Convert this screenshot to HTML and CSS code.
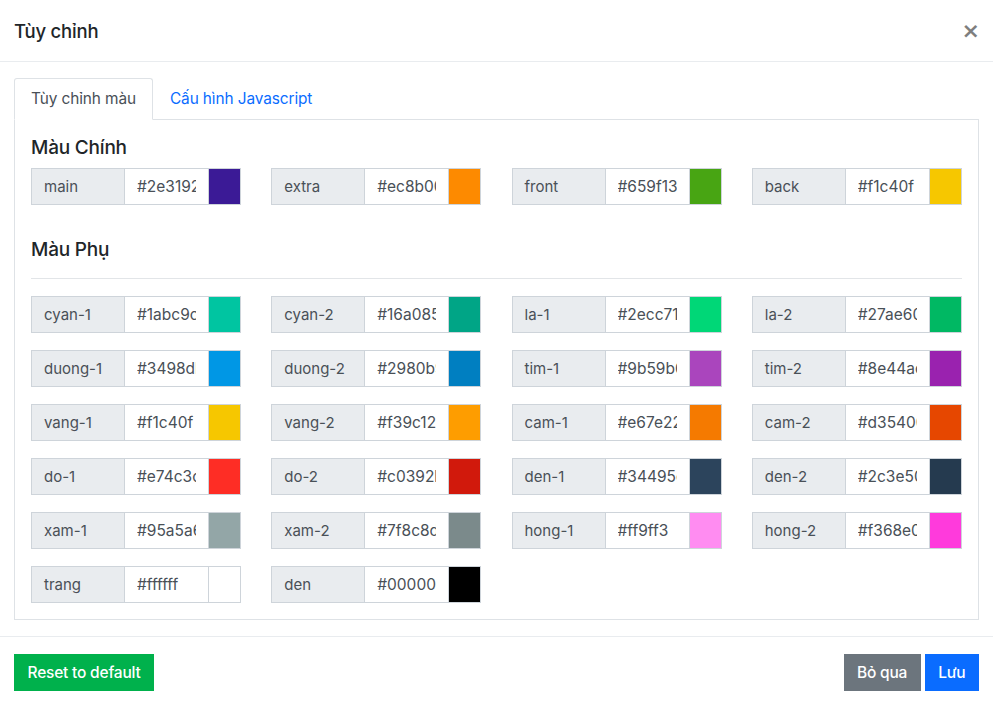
FILE: index.html
```html
<!DOCTYPE html>
<html lang="vi">
<head>
<meta charset="utf-8">
<title>Tùy chỉnh</title>
<link rel="stylesheet" href="styles.css">
</head>
<body>
<div class="modal">
  <div class="modal-header">
    <h4 class="modal-title">Tùy chỉnh</h4>
    <button class="close" type="button" aria-label="Close">×</button>
  </div>
  <div class="modal-body">
    <ul class="nav-tabs">
      <li><a class="nav-link active">Tùy chỉnh màu</a></li>
      <li><a class="nav-link">Cấu hình Javascript</a></li>
    </ul>
    <div class="tab-content">
      <h5 class="section-title">Màu Chính</h5>
      <div class="grid">
        <div class="igroup"><span class="ilabel">main</span><input class="ival" value="#2e3192"><span class="swatch" style="background:#3b1a96"></span></div>
        <div class="igroup"><span class="ilabel">extra</span><input class="ival" value="#ec8b00"><span class="swatch" style="background:#fd8a00"></span></div>
        <div class="igroup"><span class="ilabel">front</span><input class="ival" value="#659f13"><span class="swatch" style="background:#48a513"></span></div>
        <div class="igroup"><span class="ilabel">back</span><input class="ival" value="#f1c40f"><span class="swatch" style="background:#f6c700"></span></div>
      </div>
      <h5 class="section-title second">Màu Phụ</h5>
      <hr class="divider">
      <div class="grid">
        <div class="igroup"><span class="ilabel">cyan-1</span><input class="ival" value="#1abc9c"><span class="swatch" style="background:#00c5a1"></span></div>
        <div class="igroup"><span class="ilabel">cyan-2</span><input class="ival" value="#16a085"><span class="swatch" style="background:#00a586"></span></div>
        <div class="igroup"><span class="ilabel">la-1</span><input class="ival" value="#2ecc71"><span class="swatch" style="background:#00d777"></span></div>
        <div class="igroup"><span class="ilabel">la-2</span><input class="ival" value="#27ae60"><span class="swatch" style="background:#00b863"></span></div>

        <div class="igroup"><span class="ilabel">duong-1</span><input class="ival" value="#3498db"><span class="swatch" style="background:#0097e5"></span></div>
        <div class="igroup"><span class="ilabel">duong-2</span><input class="ival" value="#2980b9"><span class="swatch" style="background:#007fc1"></span></div>
        <div class="igroup"><span class="ilabel">tim-1</span><input class="ival" value="#9b59b6"><span class="swatch" style="background:#aa45bd"></span></div>
        <div class="igroup"><span class="ilabel">tim-2</span><input class="ival" value="#8e44ad"><span class="swatch" style="background:#9a22af"></span></div>

        <div class="igroup"><span class="ilabel">vang-1</span><input class="ival" value="#f1c40f"><span class="swatch" style="background:#f6c700"></span></div>
        <div class="igroup"><span class="ilabel">vang-2</span><input class="ival" value="#f39c12"><span class="swatch" style="background:#fe9d00"></span></div>
        <div class="igroup"><span class="ilabel">cam-1</span><input class="ival" value="#e67e22"><span class="swatch" style="background:#f57a00"></span></div>
        <div class="igroup"><span class="ilabel">cam-2</span><input class="ival" value="#d35400"><span class="swatch" style="background:#e64700"></span></div>

        <div class="igroup"><span class="ilabel">do-1</span><input class="ival" value="#e74c3c"><span class="swatch" style="background:#fe2d25"></span></div>
        <div class="igroup"><span class="ilabel">do-2</span><input class="ival" value="#c0392b"><span class="swatch" style="background:#d1190c"></span></div>
        <div class="igroup"><span class="ilabel">den-1</span><input class="ival" value="#34495e"><span class="swatch" style="background:#2c445c"></span></div>
        <div class="igroup"><span class="ilabel">den-2</span><input class="ival" value="#2c3e50"><span class="swatch" style="background:#253a4f"></span></div>

        <div class="igroup"><span class="ilabel">xam-1</span><input class="ival" value="#95a5a6"><span class="swatch" style="background:#93a6a7"></span></div>
        <div class="igroup"><span class="ilabel">xam-2</span><input class="ival" value="#7f8c8d"><span class="swatch" style="background:#7b8a8b"></span></div>
        <div class="igroup"><span class="ilabel">hong-1</span><input class="ival" value="#ff9ff3"><span class="swatch" style="background:#ff8cf1"></span></div>
        <div class="igroup"><span class="ilabel">hong-2</span><input class="ival" value="#f368e0"><span class="swatch" style="background:#ff3adc"></span></div>

        <div class="igroup"><span class="ilabel">trang</span><input class="ival" value="#ffffff"><span class="swatch" style="background:#ffffff"></span></div>
        <div class="igroup"><span class="ilabel">den</span><input class="ival" value="#000000"><span class="swatch" style="background:#000000"></span></div>
      </div>
    </div>
  </div>
  <div class="modal-footer">
    <button class="btn btn-success" type="button">Reset to default</button>
    <div class="spacer"></div>
    <button class="btn btn-secondary" type="button">Bỏ qua</button>
    <button class="btn btn-primary" type="button">Lưu</button>
  </div>
</div>
</body>
</html>
```

FILE: styles.css
```css
* { box-sizing: border-box; }
html, body {
  margin: 0;
  padding: 0;
  background: #fff;
}
body {
  font-family: Inter, "Noto Sans", "Liberation Sans", sans-serif;
  font-size: 16px;
  color: #212529;
  width: 993px;
  height: 704px;
  overflow: hidden;
}
.modal {
  width: 993px;
  background: #fff;
}
.modal-header {
  display: flex;
  align-items: center;
  justify-content: space-between;
  height: 62px;
  padding: 0 14px;
  border-bottom: 1px solid #e9ecef;
}
.modal-title {
  margin: 0;
  font-size: 18.5px;
  font-weight: 500;
  line-height: 30px;
  letter-spacing: -0.2px;
}
.close {
  border: 0;
  background: transparent;
  padding: 0;
  margin-right: -1px;
  font-family: "DejaVu Sans", sans-serif;
  font-size: 22px;
  font-weight: 700;
  line-height: 1;
  color: #000;
  opacity: 0.5;
  cursor: pointer;
}
.modal-body {
  padding: 16px 14px 16px 14px;
}
.nav-tabs {
  list-style: none;
  margin: 0;
  padding: 0;
  display: flex;
  border-bottom: 1px solid #dee2e6;
}
.nav-tabs li { margin-bottom: -1px; }
.nav-link {
  display: block;
  padding: 8px 16px;
  line-height: 24px;
  font-size: 15.4px;
  color: #0a6cff;
  border: 1px solid transparent;
  border-top-left-radius: 3px;
  border-top-right-radius: 3px;
  letter-spacing: -0.1px;
}
.nav-link.active {
  color: #495057;
  background: #fff;
  border-color: #dee2e6 #dee2e6 #fff;
}
.tab-content {
  border: 1px solid #dee2e6;
  border-top: 0;
  padding: 16px 16px 16px 16px;
}
.section-title {
  margin: 0 0 8px 0;
  font-size: 19px;
  font-weight: 500;
  line-height: 24px;
  letter-spacing: -0.2px;
}
.section-title.second {
  margin: 33px 0 0 0;
}
.divider {
  border: 0;
  border-top: 1px solid #e2e5e8;
  margin: 16px 0 17px 0;
  height: 0;
}
.grid {
  display: grid;
  grid-template-columns: repeat(4, 1fr);
  column-gap: 30px;
  row-gap: 17px;
}
.igroup {
  display: flex;
  height: 37px;
}
.ilabel {
  width: 94px;
  flex: none;
  display: flex;
  align-items: center;
  padding: 0 12px;
  background: #e9ecef;
  border: 1px solid #ced4da;
  color: #495057;
  font-size: 15px;
}
.ival {
  width: 84px;
  flex: none;
  height: 37px;
  padding: 0 12px;
  border: 1px solid #ced4da;
  border-left: 0;
  font-family: inherit;
  font-size: 15.5px;
  color: #495057;
  background: #fff;
  outline: none;
  min-width: 0;
}
.swatch {
  width: 32px;
  flex: none;
  border: 1px solid #ced4da;
  border-left: 0;
}
.modal-footer {
  display: flex;
  align-items: center;
  gap: 4px;
  border-top: 1px solid #e9ecef;
  padding: 17px 14px 13px 14px;
}
.spacer { flex: 1; }
.btn {
  border: 0;
  height: 37px;
  padding: 0 13.5px;
  font-family: inherit;
  font-size: 15.5px;
  font-weight: 500;
  color: #fff;
  border-radius: 0;
  cursor: pointer;
  letter-spacing: -0.2px;
}
.btn-success { background: #00b14c; padding: 0 13.5px; }
.btn-secondary { background: #6c757d; }
.btn-primary { background: #0a6cff; }
```
